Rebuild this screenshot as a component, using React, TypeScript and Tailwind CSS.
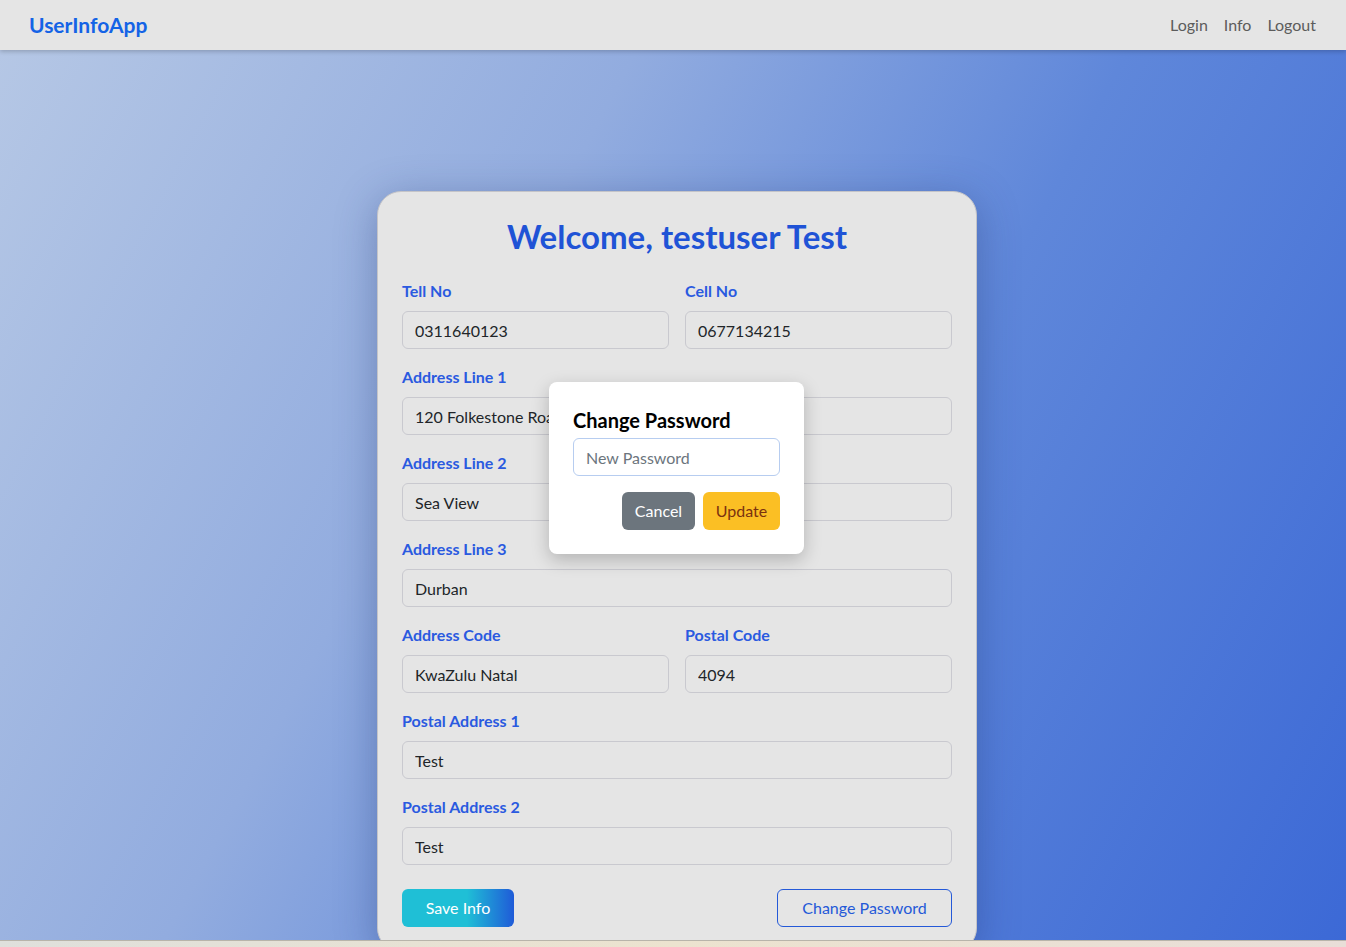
import React from 'react'

const FONT = { fontFamily: 'Lato, "Open Sans", sans-serif' }

const ROWS: { label: string; value: string }[][] = [
  [
    { label: 'Tell No', value: '0311640123' },
    { label: 'Cell No', value: '0677134215' },
  ],
  [{ label: 'Address Line 1', value: '120 Folkestone Road' }],
  [{ label: 'Address Line 2', value: 'Sea View' }],
  [{ label: 'Address Line 3', value: 'Durban' }],
  [
    { label: 'Address Code', value: 'KwaZulu Natal' },
    { label: 'Postal Code', value: '4094' },
  ],
  [{ label: 'Postal Address 1', value: 'Test' }],
  [{ label: 'Postal Address 2', value: 'Test' }],
]

function Field({ label, value }: { label: string; value: string }) {
  return (
    <div className="mb-4 flex min-w-0 flex-1 flex-col">
      <label className="mb-2 text-[16px] leading-6 font-bold text-[#2a5ae0]">{label}</label>
      <input
        readOnly
        value={value}
        className="h-[38px] w-full rounded-[6px] border border-[#c9c9cf] bg-transparent px-3 text-[16px] text-[#212529] outline-none"
      />
    </div>
  )
}

export default function App() {
  return (
    <div className="flex h-screen flex-col overflow-hidden" style={FONT}>
      <nav className="relative z-10 flex h-[50px] shrink-0 items-center justify-between bg-[#e5e5e5] pr-[30px] pl-[29px] shadow-[0_2px_4px_rgba(0,0,0,0.18)]">
        <span className="text-[21px] font-bold text-[#1463e6]">UserInfoApp</span>
        <div className="flex items-center gap-4 text-[16px] text-[#5c5c5c]">
          <span>Login</span>
          <span>Info</span>
          <span>Logout</span>
        </div>
      </nav>

      <main className="flex flex-1 justify-center overflow-hidden bg-[linear-gradient(118deg,#b5c7e5_0%,#92acdf_35%,#5f87da_62%,#3c69d6_100%)] pt-[141px] pl-2">
        <div className="relative h-fit w-[600px] shrink-0 rounded-[24px] border border-[#c4c4c8] bg-[#e5e5e5] p-6 shadow-[0_8px_40px_rgba(30,50,110,0.35)]">
          <h1 className="mb-[23px] text-center text-[33px] leading-10 font-bold text-[#1f53d6]">
            Welcome, testuser Test
          </h1>
          {ROWS.map((row, i) => (
            <div key={i} className="flex gap-4">
              {row.map((f) => (
                <Field key={f.label} label={f.label} value={f.value} />
              ))}
            </div>
          ))}
          <div className="mt-2 flex items-center justify-between">
            <button className="h-[38px] w-[112px] rounded-[6px] bg-[linear-gradient(90deg,#1fbfd6_0%,#1fbfd6_58%,#1f5bd8_100%)] text-[16px] text-white">
              Save Info
            </button>
            <button className="h-[38px] w-[175px] rounded-[6px] border border-[#2459d8] text-[16px] text-[#2459d8]">
              Change Password
            </button>
          </div>

          <div className="absolute top-[190px] left-[171px] w-[255px] rounded-[8px] bg-white p-6 shadow-[0_6px_18px_rgba(0,0,0,0.22)]">
            <h2 className="mb-1 text-[20px] leading-7 font-bold text-black">Change Password</h2>
            <input
              placeholder="New Password"
              className="h-[38px] w-full rounded-[6px] border border-[#b7cdf0] bg-white px-3 text-[16px] text-[#212529] outline-none placeholder:text-[#6c757d]"
            />
            <div className="mt-4 flex justify-end gap-2">
              <button className="h-[38px] w-[73px] rounded-[6px] bg-[#6c757d] text-[16px] text-white">Cancel</button>
              <button className="h-[38px] w-[77px] rounded-[6px] bg-[#fbbf24] text-[16px] text-[#7a3210]">Update</button>
            </div>
          </div>
        </div>
      </main>

      <div className="h-[7px] shrink-0 border-t border-[#b8b4aa] bg-[linear-gradient(90deg,#dfe0dc,#ece3cf_50%,#e9ded8)]" />
    </div>
  )
}
